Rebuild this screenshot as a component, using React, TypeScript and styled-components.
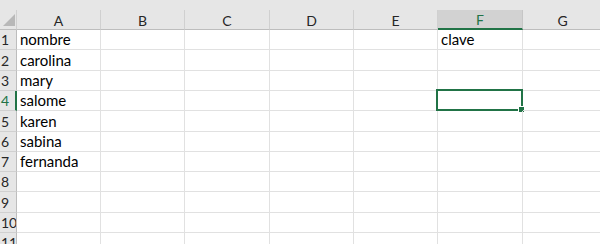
import React from 'react';
import styled, { createGlobalStyle } from 'styled-components';

const GlobalStyle = createGlobalStyle`
    html, body {
        margin: 0;
        padding: 0;
        background: #ffffff;
        overflow: hidden;
    }
    body {
        font-family: Lato, "Open Sans", "Liberation Sans", sans-serif;
    }
`;

const GREEN = '#217346';
const HEAD_BG = '#e6e6e6';
const GRID = '#e1e1e1';

const COLUMNS = ['A', 'B', 'C', 'D', 'E', 'F', 'G'];
const COL_WIDTHS = [84, 84, 85, 84, 84, 85, 80];
const ROW_HEIGHTS = [20, 21, 20, 20, 21, 20, 20, 20, 21, 20, 20];

const SELECTED_COL = 'F';
const SELECTED_ROW = 4;

const data: Record<string, string> = {
    A1: 'nombre',
    A2: 'carolina',
    A3: 'mary',
    A4: 'salome',
    A5: 'karen',
    A6: 'sabina',
    A7: 'fernanda',
    F1: 'clave',
};

const Sheet = styled.div`
    width: 600px;
    height: 244px;
    overflow: hidden;
    display: grid;
    grid-template-columns: 17px ${COL_WIDTHS.map(w => `${w}px`).join(' ')};
    grid-template-rows: 10px 20px ${ROW_HEIGHTS.map(h => `${h}px`).join(' ')};
`;

const TopStrip = styled.div`
    grid-column: 1 / -1;
    background: ${HEAD_BG};
`;

const Corner = styled.div`
    background: ${HEAD_BG};
    border-bottom: 1px solid #bdbdbd;
    border-right: 1px solid #d0d0d0;
    box-sizing: border-box;
    position: relative;
    display: flex;
    align-items: flex-end;
    justify-content: flex-end;
    padding: 0 1px 3px 0;
`;

const CornerTriangle = styled.div`
    width: 0;
    height: 0;
    border-left: 12px solid transparent;
    border-bottom: 12px solid #b8b8b8;
`;

const ColHead = styled.div<{ $active: boolean }>`
    background: ${p => (p.$active ? '#d2d2d2' : HEAD_BG)};
    border-right: 1px solid ${p => (p.$active ? '#c6c6c6' : '#d0d0d0')};
    border-bottom: ${p => (p.$active ? `2px solid ${GREEN}` : '1px solid #bdbdbd')};
    box-sizing: border-box;
    display: flex;
    align-items: center;
    justify-content: center;
    font-size: 14px;
    color: ${p => (p.$active ? GREEN : '#262626')};
    padding-top: 1px;
`;

const RowHead = styled.div<{ $active: boolean }>`
    background: ${HEAD_BG};
    border-bottom: 1px solid #d0d0d0;
    border-right: ${p => (p.$active ? `2px solid ${GREEN}` : '1px solid #bdbdbd')};
    box-sizing: border-box;
    display: flex;
    align-items: center;
    font-size: 14px;
    padding-left: 1px;
    color: ${p => (p.$active ? GREEN : '#262626')};
    white-space: nowrap;
    overflow: hidden;
`;

const Cell = styled.div`
    position: relative;
    border-right: 1px solid ${GRID};
    border-bottom: 1px solid ${GRID};
    box-sizing: border-box;
    display: flex;
    align-items: flex-end;
    padding: 0 3px 1px;
    font-size: 15px;
    color: #000000;
    white-space: nowrap;
`;

const Selection = styled.div`
    position: absolute;
    left: -2px;
    top: -2px;
    right: -1px;
    bottom: -1px;
    border: 2px solid ${GREEN};
    pointer-events: none;
`;

const FillHandle = styled.div`
    position: absolute;
    right: -4px;
    bottom: -4px;
    width: 5px;
    height: 5px;
    background: ${GREEN};
    border: 1px solid #ffffff;
`;

export default function App() {
    return (
        <>
            <GlobalStyle />
            <Sheet>
                <TopStrip />
                <Corner>
                    <CornerTriangle />
                </Corner>
                {COLUMNS.map(c => (
                    <ColHead key={c} $active={c === SELECTED_COL}>
                        {c}
                    </ColHead>
                ))}
                {ROW_HEIGHTS.map((_, i) => {
                    const row = i + 1;
                    return (
                        <React.Fragment key={row}>
                            <RowHead $active={row === SELECTED_ROW}>{row}</RowHead>
                            {COLUMNS.map(c => {
                                const isSel = c === SELECTED_COL && row === SELECTED_ROW;
                                return (
                                    <Cell key={c + row}>
                                        {data[c + row]}
                                        {isSel && (
                                            <Selection>
                                                <FillHandle />
                                            </Selection>
                                        )}
                                    </Cell>
                                );
                            })}
                        </React.Fragment>
                    );
                })}
            </Sheet>
        </>
    );
}
